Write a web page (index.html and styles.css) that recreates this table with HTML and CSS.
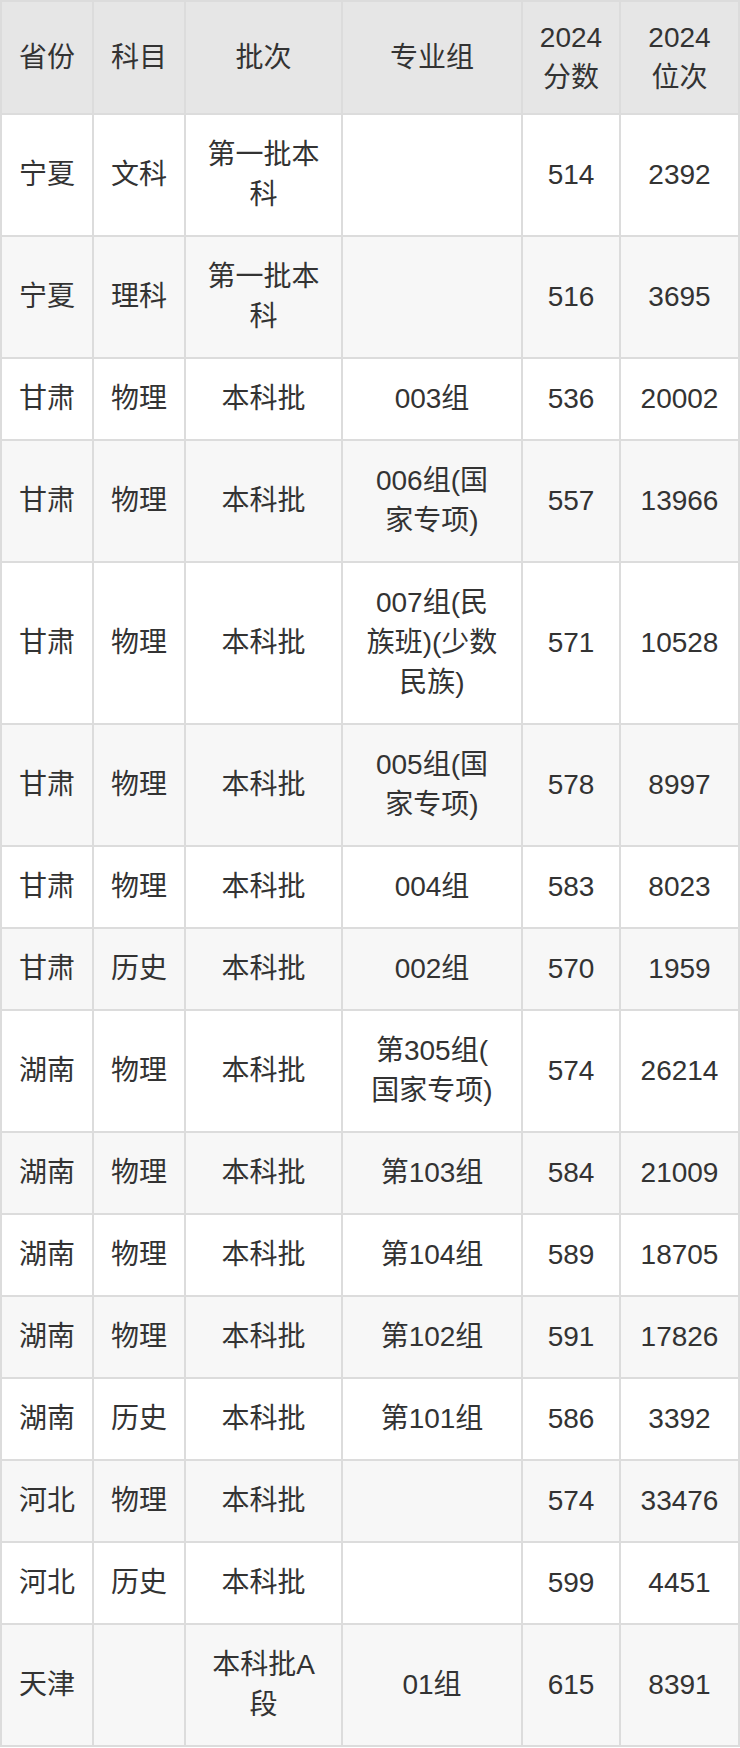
FILE: index.html
```html
<!DOCTYPE html>
<html lang="zh-CN">
<head>
<meta charset="utf-8">
<title>2024 分数位次</title>
<link rel="stylesheet" href="styles.css">
</head>
<body>
<table class="score-table">
  <thead>
    <tr>
      <th class="c-prov">省份</th>
      <th class="c-subj">科目</th>
      <th class="c-batch">批次</th>
      <th class="c-group">专业组</th>
      <th class="c-score">2024<br>分数</th>
      <th class="c-rank">2024<br>位次</th>
    </tr>
  </thead>
  <tbody>
    <tr><td>宁夏</td><td>文科</td><td>第一批本科</td><td class="c-group"></td><td>514</td><td>2392</td></tr>
    <tr><td>宁夏</td><td>理科</td><td>第一批本科</td><td class="c-group"></td><td>516</td><td>3695</td></tr>
    <tr><td>甘肃</td><td>物理</td><td>本科批</td><td class="c-group">003组</td><td>536</td><td>20002</td></tr>
    <tr><td>甘肃</td><td>物理</td><td>本科批</td><td class="c-group">006组(国家专项)</td><td>557</td><td>13966</td></tr>
    <tr><td>甘肃</td><td>物理</td><td>本科批</td><td class="c-group">007组(民族班)(少数民族)</td><td>571</td><td>10528</td></tr>
    <tr><td>甘肃</td><td>物理</td><td>本科批</td><td class="c-group">005组(国家专项)</td><td>578</td><td>8997</td></tr>
    <tr><td>甘肃</td><td>物理</td><td>本科批</td><td class="c-group">004组</td><td>583</td><td>8023</td></tr>
    <tr><td>甘肃</td><td>历史</td><td>本科批</td><td class="c-group">002组</td><td>570</td><td>1959</td></tr>
    <tr><td>湖南</td><td>物理</td><td>本科批</td><td class="c-group">第305组(国家专项)</td><td>574</td><td>26214</td></tr>
    <tr><td>湖南</td><td>物理</td><td>本科批</td><td class="c-group">第103组</td><td>584</td><td>21009</td></tr>
    <tr><td>湖南</td><td>物理</td><td>本科批</td><td class="c-group">第104组</td><td>589</td><td>18705</td></tr>
    <tr><td>湖南</td><td>物理</td><td>本科批</td><td class="c-group">第102组</td><td>591</td><td>17826</td></tr>
    <tr><td>湖南</td><td>历史</td><td>本科批</td><td class="c-group">第101组</td><td>586</td><td>3392</td></tr>
    <tr><td>河北</td><td>物理</td><td>本科批</td><td class="c-group"></td><td>574</td><td>33476</td></tr>
    <tr><td>河北</td><td>历史</td><td>本科批</td><td class="c-group"></td><td>599</td><td>4451</td></tr>
    <tr><td>天津</td><td></td><td>本科批A段</td><td class="c-group">01组</td><td>615</td><td>8391</td></tr>
  </tbody>
</table>
</body>
</html>
```

FILE: styles.css
```css
html, body {
  margin: 0;
  padding: 0;
  background: #ffffff;
}

body {
  font-family: "Liberation Sans", "Noto Sans CJK SC", sans-serif;
  font-size: 28px;
  line-height: 40px;
  color: #333333;
}

.score-table {
  width: 740px;
  table-layout: fixed;
  border-collapse: separate;
  border-spacing: 0;
  border-top: 2px solid #dcdcdc;
  border-left: 2px solid #dcdcdc;
}

.score-table th,
.score-table td {
  box-sizing: border-box;
  border-right: 2px solid #dcdcdc;
  border-bottom: 2px solid #dcdcdc;
  padding: 20px 16px;
  text-align: center;
  vertical-align: middle;
  font-weight: normal;
}

.score-table th {
  background: #e6e6e6;
  padding-top: 16px;
  padding-bottom: 15px;
}

.score-table tbody tr:nth-child(even) td {
  background: #f7f7f7;
}

.score-table .c-prov { width: 92px; }
.score-table .c-subj { width: 92px; }
.score-table .c-batch { width: 157px; }
.score-table .c-group { width: 180px; }
.score-table .c-score { width: 98px; }
.score-table .c-rank { width: 119px; }

.score-table td.c-group,
.score-table th.c-group {
  padding-left: 20px;
  padding-right: 20px;
  line-break: anywhere;
}
```
